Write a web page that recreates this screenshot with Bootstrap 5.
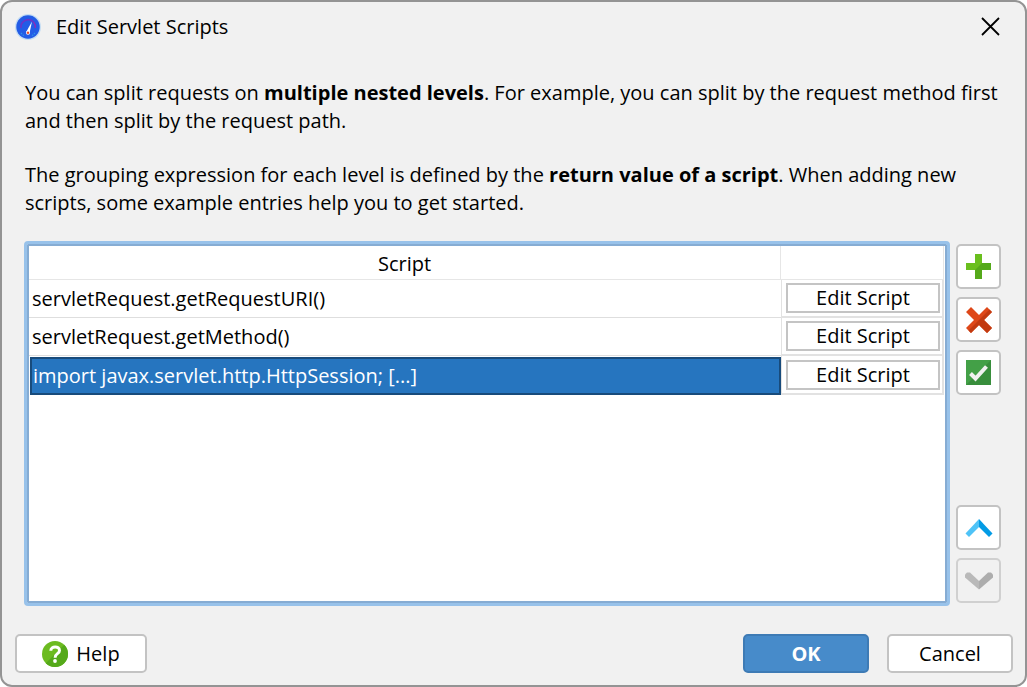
<!DOCTYPE html>
<html lang="en">
<head>
<meta charset="utf-8">
<meta name="viewport" content="width=device-width, initial-scale=1">
<title>Edit Servlet Scripts</title>
<link href="https://cdn.jsdelivr.net/npm/bootstrap@5.3.0/dist/css/bootstrap.min.css" rel="stylesheet">
<style>
  body { background: #fff; color: #000; font-family: "Open Sans", "Noto Sans", sans-serif; font-size: 20px; line-height: 28px; }
  .dialog { background: #f1f1f1; border: 2px solid #949494; border-radius: 12px; }
  .titlebar { padding: 0 24px 0 13px; height: 50px; gap: 15px; }
  .titlebar h1 { font-size: 20px; line-height: 28px; }
  .close-btn { line-height: 0; }
  .intro { padding: 27px 22px 24px 23px; }
  .intro p { margin-bottom: 26px; }
  .intro p:last-child { margin-bottom: 0; }
  .workspace { padding: 0 24px 0 22px; gap: 6px; }
  .list-frame { background: #fff; border: 3px solid #98c2ea; border-radius: 4px; box-shadow: inset 0 0 0 2px #86acd3; padding: 2px 3px 2px 2px; }
  .scripts { table-layout: fixed; border-collapse: separate; border-spacing: 0; width: 100%; }
  .scripts th { height: 34px; padding: 2px 0 0; font-weight: 400; text-align: center; border: solid #e6e6e6; border-width: 0 1px 1px 0; }
  .scripts td { height: 38px; padding: 0 3px; border-bottom: 1px solid #dedede; }
  .scripts td:last-child { padding: 0 2px 0 4px; border: solid #e2e2e2; border-width: 0 2px 2px 1px; }
  .scripts .action-col { width: 163px; }
  .scripts .chosen td:first-child { padding: 1px 0 0 1px; border: 0; }
  .chosen-fill { height: 38px; line-height: 34px; margin-bottom: 0; padding: 0 1px; color: #fff; background: #2675bf; border: 2px solid #184b7b; }
  .edit-btn { display: block; width: 100%; height: 30px; padding: 0; line-height: 26px; color: #000; background: #fff; border: 2px solid #c4c4c4; }
  .face { color: #000; background: #fff; border: 2px solid #c3c3c3; border-radius: 5px; }
  .face:disabled { background: #f1f1f1; border-color: #d0d0d0; }
  .side { padding: 3px 0; gap: 8px; }
  .tool-btn { width: 45px; height: 45px; padding: 0; }
  .footer-bar { padding: 28px 12px 12px 13px; gap: 18px; }
  .footer-btn { height: 39px; width: 126px; padding: 0; }
  .help-btn { width: 132px; gap: 8px; }
  .ok-btn { color: #fff; background: #478bca; border-color: #3e7bb5; }
</style>
</head>
<body>
<main class="dialog d-flex flex-column min-vh-100">
  <header class="titlebar d-flex align-items-center">
    <svg width="26" height="26" viewBox="0 0 26 26" aria-hidden="true">
      <circle cx="13" cy="13" r="13" fill="#c3dcf3"/>
      <circle cx="13" cy="13" r="11.7" fill="#235ce6"/>
      <path d="M6 14a7.300 7.300 0 0 1 12.500-6" fill="none" stroke="#6a35c8" stroke-width="1.600"/>
      <path d="M18.500 8a7.300 7.300 0 0 1 1.800 6" fill="none" stroke="#8e2bb8" stroke-width="1.400"/>
      <path d="M6 19l2 2 2 1M20 19l-2 2-2 1" fill="none" stroke="#2f93e8" stroke-width="1.200" stroke-dasharray="1.500 1"/>
      <path d="M17 7.500L11.200 18l3.400.8z" fill="#fff"/>
      <circle cx="13" cy="18.700" r="2" fill="#fff"/><circle cx="13" cy="18.700" r="1.200" fill="#e8492c"/>
    </svg>
    <h1 class="mb-0 fw-normal flex-grow-1">Edit Servlet Scripts</h1>
    <button type="button" class="close-btn border-0 bg-transparent p-0" aria-label="Close">
      <svg width="20" height="20" viewBox="0 0 20 20"><path d="M1 1l17 17M18 1L1 18" stroke="#000" stroke-width="1.800"/></svg>
    </button>
  </header>

  <section class="intro">
    <p>You can split requests on <b>multiple nested levels</b>. For example, you can split by the request method first and then split by the request path.</p>
    <p>The grouping expression for each level is defined by the <b>return value of a script</b>. When adding new scripts, some example entries help you to get started.</p>
  </section>

  <section class="workspace d-flex flex-grow-1">
    <div class="list-frame flex-grow-1">
      <table class="scripts">
        <colgroup><col><col class="action-col"></colgroup>
        <thead><tr><th scope="col">Script</th><th scope="col" aria-label="Action"></th></tr></thead>
        <tbody>
          <tr><td>servletRequest.getRequestURI()</td><td><button type="button" class="edit-btn">Edit Script</button></td></tr>
          <tr><td>servletRequest.getMethod()</td><td><button type="button" class="edit-btn">Edit Script</button></td></tr>
          <tr class="chosen"><td><div class="chosen-fill">import javax.servlet.http.HttpSession; [...]</div></td><td><button type="button" class="edit-btn">Edit Script</button></td></tr>
        </tbody>
      </table>
    </div>
    <div class="side d-flex flex-column">
      <button type="button" class="face tool-btn d-flex align-items-center justify-content-center" aria-label="Add">
        <svg width="25" height="25" viewBox="0 0 25 25"><path d="M9 0h7v9h9v7h-9v9H9v-9H0V9h9z" fill="#6abf1e"/><path d="M16 9h9v7h-9v9H9v-9z" fill="#55a91a"/></svg>
      </button>
      <button type="button" class="face tool-btn d-flex align-items-center justify-content-center" aria-label="Remove">
        <svg width="26" height="26" viewBox="0 0 26 26"><path d="M5 0l8 8 8-8 5 5-8 8 8 8-5 5-8-8-8 8-5-5 8-8-8-8z" fill="#de4718"/><path d="M26 5l-8 8 8 8-5 5-8-8-8 8-2.500-2.500L23.500 2.500z" fill="#c23a10"/></svg>
      </button>
      <button type="button" class="face tool-btn d-flex align-items-center justify-content-center" aria-label="Check">
        <svg width="25" height="25" viewBox="0 0 25 25"><path d="M0 0h25v25H0z" fill="#43a047"/><path d="M25 0v25H0z" fill="#388e3c"/><path d="M4.500 13.500l5 5L20.500 6.500" fill="none" stroke="#f1f1f1" stroke-width="4"/></svg>
      </button>
      <button type="button" class="face tool-btn mt-auto d-flex align-items-center justify-content-center" aria-label="Move up">
        <svg width="28" height="20" viewBox="0 0 28 20"><path d="M14 1v8L4 19l-3.500-3.500z" fill="#4fc3f7"/><path d="M14 1v8l10 10 3.500-3.500z" fill="#039be5"/></svg>
      </button>
      <button type="button" class="face tool-btn d-flex align-items-center justify-content-center" aria-label="Move down" disabled>
        <svg width="28" height="18" viewBox="0 0 28 18"><path d="M14 17.500V9L5 .5H2L0 2.500v3z" fill="#b9b9b9"/><path d="M14 17.500V9l9-8.500h3l2 2v3z" fill="#adadad"/></svg>
      </button>
    </div>
  </section>

  <footer class="footer-bar d-flex align-items-center">
    <button type="button" class="face footer-btn help-btn d-flex align-items-center justify-content-center me-auto">
      <svg width="26" height="26" viewBox="0 0 26 26" aria-hidden="true"><circle cx="13" cy="13" r="13" fill="#6cbb20"/><path d="M22.200 3.800A13 13 0 0 1 3.800 22.200z" fill="#55a91a"/><path d="M8.800 9.800c0-5.200 8.700-5 8.700-.4 0 3.600-4.400 3-4.400 7.300" fill="none" stroke="#fff" stroke-width="3"/><circle cx="13" cy="20" r="1.900" fill="#fff"/></svg>
      <span>Help</span>
    </button>
    <button type="button" class="face footer-btn ok-btn fw-bold">OK</button>
    <button type="button" class="face footer-btn">Cancel</button>
  </footer>
</main>
<script src="https://cdn.jsdelivr.net/npm/bootstrap@5.3.0/dist/js/bootstrap.bundle.min.js"></script>
</body>
</html>
